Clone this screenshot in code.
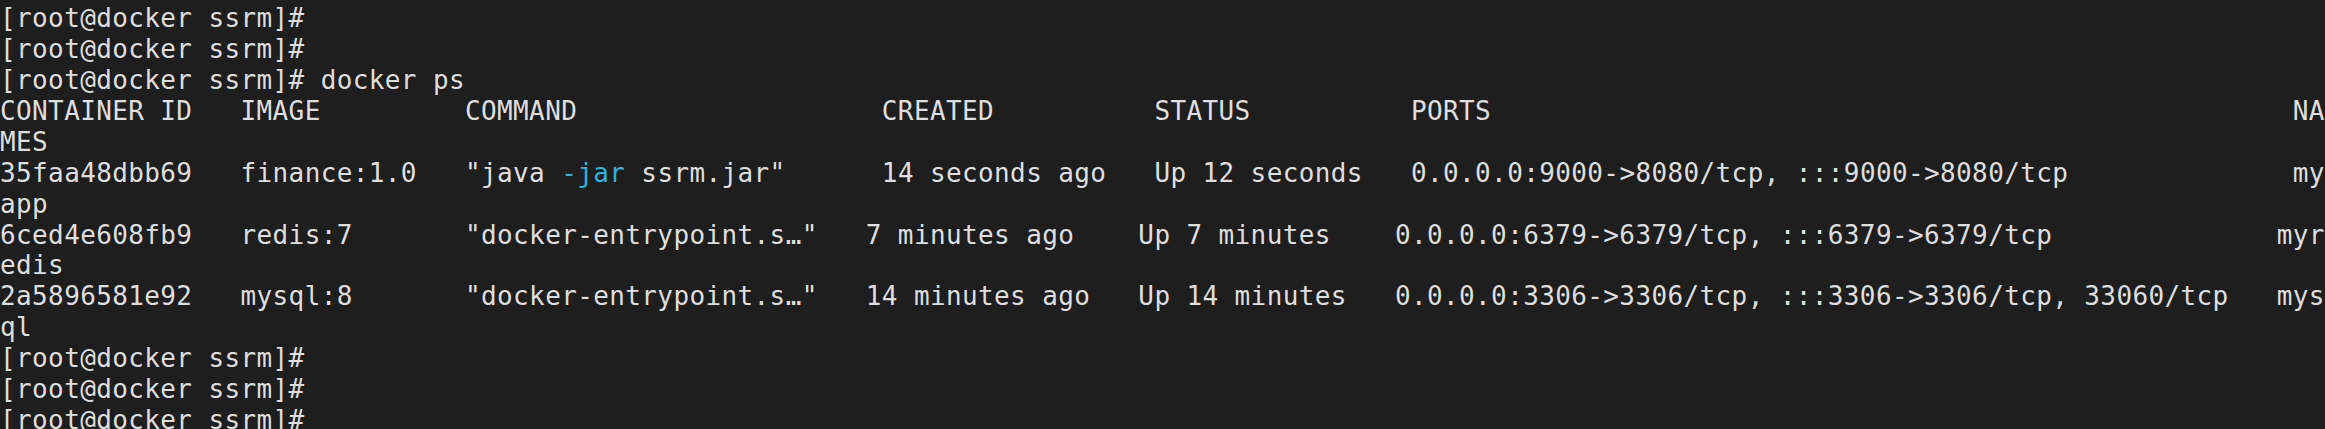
const PROMPT = "[root@docker ssrm]#";

type Line = { text: string; jar?: boolean };

const lines: Line[] = [
  { text: PROMPT },
  { text: PROMPT },
  { text: PROMPT },
  { text: PROMPT + " docker ps" },
  {
    text: "CONTAINER ID   IMAGE         COMMAND                   CREATED          STATUS          PORTS                                                  NA",
  },
  { text: "MES" },
  {
    text: '35faa48dbb69   finance:1.0   "java -jar ssrm.jar"      14 seconds ago   Up 12 seconds   0.0.0.0:9000->8080/tcp, :::9000->8080/tcp              my',
    jar: true,
  },
  { text: "app" },
  {
    text: '6ced4e608fb9   redis:7       "docker-entrypoint.s…"   7 minutes ago    Up 7 minutes    0.0.0.0:6379->6379/tcp, :::6379->6379/tcp              myr',
  },
  { text: "edis" },
  {
    text: '2a5896581e92   mysql:8       "docker-entrypoint.s…"   14 minutes ago   Up 14 minutes   0.0.0.0:3306->3306/tcp, :::3306->3306/tcp, 33060/tcp   mys',
  },
  { text: "ql" },
  { text: PROMPT },
  { text: PROMPT },
  { text: PROMPT },
];

const TermLine = ({ line }: { line: Line }) => {
  if (!line.jar) return <div className="h-[30.95px]">{line.text}</div>;
  const [before, after] = line.text.split("-jar");
  return (
    <div className="h-[30.95px]">
      {before}
      <span className="text-[#2fb2de]">-jar</span>
      {after}
    </div>
  );
};

export default function App() {
  return (
    <div className="h-[429px] w-full overflow-hidden bg-[#1e1e1e] text-[#dedede]">
      <div className="-mt-[28px] whitespace-pre font-['DejaVu_Sans_Mono',monospace] text-[26px] leading-[30.95px] tracking-[0.38px]">
        {lines.map((l, i) => (
          <TermLine key={i} line={l} />
        ))}
      </div>
    </div>
  );
}
